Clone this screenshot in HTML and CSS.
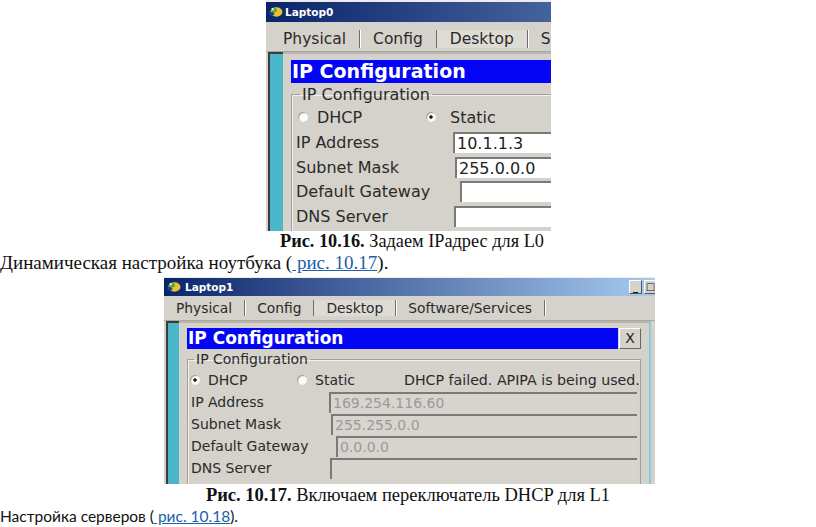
FILE: index.html
```html
<!DOCTYPE html>
<html lang="ru">
<head>
    <meta charset="UTF-8">
    <title>Рис. 10.16 – 10.17</title>
    <link rel="stylesheet" href="styles.css">
</head>
<body>

    <div class="win win-a">
        <div class="win-title">
            <svg class="win-icon" viewBox="0 0 16 12"><ellipse cx="9" cy="6" rx="6.5" ry="5" fill="#e6c42c"/><path d="M3 3 C5 0.5 9 1 9.5 3.5 C10 6 7 7 4.5 6.5Z" fill="#5aa83c"/><path d="M1 6 C3 5 6 6 7 8 C6 10 3 10 1.5 9Z" fill="#1d3f8f"/><circle cx="5" cy="3" r="1.2" fill="#f4f4e0"/></svg>
            <span>Laptop0</span>
        </div>
        <div class="win-tabs">
            <span class="tab">Physical</span><span class="tab">Config</span><span class="tab tab-on">Desktop</span><span class="tab">Software/Services</span>
        </div>
        <div class="win-body">
            <div class="side"></div>
            <div class="pane">
                <div class="pane-head"><span class="pane-title">IP Configuration</span></div>
                <fieldset class="group">
                    <legend>IP Configuration</legend>
                    <div class="radios">
                        <span class="opt"><i class="radio"></i>DHCP</span>
                        <span class="opt"><i class="radio radio-on"></i>Static</span>
                    </div>
                    <div class="field"><span class="label">IP Address</span><span class="box">10.1.1.3</span></div>
                    <div class="field"><span class="label">Subnet Mask</span><span class="box off-2">255.0.0.0</span></div>
                    <div class="field"><span class="label">Default Gateway</span><span class="box off-7"></span></div>
                    <div class="field"><span class="label">DNS Server</span><span class="box off-1"></span></div>
                </fieldset>
            </div>
        </div>
    </div>

    <p class="caption"><b>Рис. 10.16.</b> Задаем IPадрес для L0</p>
    <p class="para">Динамическая настройка ноутбука (<a href="#">&nbsp;рис. 10.17</a>).</p>

    <div class="win win-b">
        <div class="win-title">
            <svg class="win-icon" viewBox="0 0 16 12"><ellipse cx="9" cy="6" rx="6.5" ry="5" fill="#e6c42c"/><path d="M3 3 C5 0.5 9 1 9.5 3.5 C10 6 7 7 4.5 6.5Z" fill="#5aa83c"/><path d="M1 6 C3 5 6 6 7 8 C6 10 3 10 1.5 9Z" fill="#1d3f8f"/><circle cx="5" cy="3" r="1.2" fill="#f4f4e0"/></svg>
            <span>Laptop1</span>
            <span class="win-btns"><span class="win-btn">_</span><span class="win-btn">□</span></span>
        </div>
        <div class="win-tabs">
            <span class="tab">Physical</span><span class="tab">Config</span><span class="tab tab-on">Desktop</span><span class="tab">Software/Services</span>
        </div>
        <div class="win-body">
            <div class="side"></div>
            <div class="pane">
                <div class="pane-head"><span class="pane-title">IP Configuration</span><span class="close">X</span></div>
                <fieldset class="group">
                    <legend>IP Configuration</legend>
                    <div class="radios">
                        <span class="opt"><i class="radio radio-on"></i>DHCP</span>
                        <span class="opt"><i class="radio"></i>Static</span>
                        <span class="note">DHCP failed. APIPA is being used.</span>
                    </div>
                    <div class="field"><span class="label">IP Address</span><span class="box">169.254.116.60</span></div>
                    <div class="field"><span class="label">Subnet Mask</span><span class="box off-2">255.255.0.0</span></div>
                    <div class="field"><span class="label">Default Gateway</span><span class="box off-7">0.0.0.0</span></div>
                    <div class="field"><span class="label">DNS Server</span><span class="box off-1"></span></div>
                </fieldset>
            </div>
        </div>
    </div>

    <p class="caption"><b>Рис. 10.17.</b> Включаем переключатель DHCP для L1</p>
    <p class="para para-sans">Настройка серверов (<a href="#">&nbsp;рис. 10.18</a>).</p>

</body>
</html>
```

FILE: styles.css
```css
:root {
    --panel: #d5d2cb;
    --teal: #4ab6c9;
    --shade: #7a7a7a;
}
* { box-sizing: border-box; margin: 0; padding: 0; }
body {
    font-family: "Liberation Serif", "Times New Roman", serif;
    font-size: 18.3px;
    color: #111;
    background: #fff;
    width: 816px;
    height: 527px;
    overflow: hidden;
}

/* ---- окно Packet Tracer ---- */
.win {
    background: var(--panel);
    overflow: hidden;
    font-family: "DejaVu Sans", Verdana, sans-serif;
    color: #2a2a2a;
}
.win-title {
    display: flex;
    align-items: center;
    gap: 2px;
    padding-left: 2px;
    color: #fff;
    font-weight: bold;
    font-size: 10.5px;
    background: linear-gradient(to right, #0a246a, #a6caf0);
}
.win-icon { width: 15px; height: 12px; flex: none; }
.win-btns { margin-left: auto; display: flex; gap: 2px; margin-right: -2px; }
.win-btn {
    width: 13px;
    height: 14px;
    background: var(--panel);
    color: #111;
    font-size: 10px;
    line-height: 12px;
    text-align: center;
    border: 1px solid;
    border-color: #fff #555 #555 #fff;
}
.win-tabs {
    display: flex;
    align-items: center;
    white-space: nowrap;
    border-bottom: 1px solid #a9a6a0;
}
.tab {
    padding: 0 13px;
    border-right: 1px solid #6e6e6e;
    box-shadow: 1px 0 0 #fff;
    flex: none;
}
.tab-on { background: #dedbd5; }
.win-body {
    display: flex;
    padding-left: 2px;
}
.side {
    flex: none;
    background: var(--teal);
    border-left: 2px solid #3c3c3c;
    border-top: 2px solid #3c3c3c;
}
.pane {
    flex: none;
    border-top: 2px solid #b9b6b0;
}
.pane-head { display: flex; gap: 1px; }
.pane-title {
    flex: 1;
    background: #0505f5;
    color: #fff;
    font-weight: bold;
    padding-left: 1px;
    white-space: nowrap;
}
.close {
    flex: none;
    background: var(--panel);
    color: #222;
    text-align: center;
    border: 1px solid;
    border-color: #fff #666 #666 #fff;
}
.group {
    border: 1px solid #a3a09a;
    box-shadow: inset 1px 1px 0 #f2f0ec;
    min-width: 0;
}
.group legend { padding: 0 2px; }
.radios { display: flex; align-items: center; white-space: nowrap; }
.opt { display: flex; align-items: center; flex: none; }
.radio {
    width: 10px;
    height: 10px;
    border-radius: 50%;
    background: #fbfbfb;
    box-shadow: inset 1px 1px 1px #9a9a9a;
    flex: none;
}
.radio-on { background: radial-gradient(circle, #1a1a1a 0 1.4px, #fbfbfb 2px); }
.field { display: flex; align-items: center; white-space: nowrap; }
.label { flex: none; }
.box {
    flex: none;
    background: #fff;
    color: #222;
    border-top: 2px solid var(--shade);
    border-left: 2px solid var(--shade);
    padding-left: 2px;
    white-space: nowrap;
    overflow: hidden;
}

/* ---- первый снимок (крупнее) ---- */
.win-a { margin-left: 266px; width: 285px; height: 231px; border-top: 2px solid #ececec; }
.win-a .win-title { height: 20px; background-size: 760px 100%; }
.win-a .win-tabs { height: 30px; font-size: 15.5px; padding: 5px 0 0 4px; }
.win-a .side { width: 15px; }
.win-a .pane { padding: 6px 0 0 8px; }
.win-a .pane-title { height: 23px; line-height: 23px; font-size: 19px; width: 280px; }
.win-a .group { margin-top: 3px; width: 320px; padding: 0 0 6px 4px; font-size: 16px; }
.win-a .group legend { margin-left: 4px; line-height: 17px; }
.win-a .radios { height: 24px; margin-top: 2px; }
.win-a .radio { margin: 0 9px 0 2px; }
.win-a .opt:first-child { width: 128px; }
.win-a .opt:last-child .radio { margin-left: 2px; margin-right: 14px; }
.win-a .field { height: 24.5px; }
.win-a .radios + .field { margin-top: 1.5px; }
.win-a .label { width: 157px; }
.win-a .box { width: 140px; height: 21px; line-height: 19px; font-size: 16px; }

/* ---- второй снимок ---- */
.win-b { margin: 4px 0 0 164px; width: 491px; height: 207px; border-top: 1px solid #ececec; }
.win-b .win-title { height: 18px; }
.win-b .win-title span:nth-of-type(1) { margin-left: 2px; }
.win-b .win-tabs { height: 25px; font-size: 13.8px; padding-left: 0; }
.win-b .tab { padding: 0 12px; }
.win-b .side { width: 13px; }
.win-b .pane { padding: 5px 8px 0 8px; width: 472px; border-right: 2px solid #7fcfdb; }
.win-b .pane-title { height: 21px; line-height: 21px; font-size: 17px; }
.win-b .close { width: 22px; height: 21px; line-height: 19px; font-size: 14px; }
.win-b .group { margin-top: 2px; padding: 0 3px 8px 3px; font-size: 14px; }
.win-b .group legend { margin-left: 3px; line-height: 16px; }
.win-b .radios { height: 22px; margin-top: 2px; }
.win-b .radio { margin: 0 8px 0 -1px; }
.win-b .opt:first-child { width: 107px; }
.win-b .opt:nth-child(2) { width: 106px; }
.win-b .note { font-size: 14.2px; }
.win-b .field { height: 22px; }
.win-b .label { width: 138px; }
.win-b .box { flex: 1; height: 21px; line-height: 19px; font-size: 14px; background: #d8d5cf; color: #9a9a9a; }

.off-1 { margin-left: 1px; }
.off-2 { margin-left: 2px; }
.off-7 { margin-left: 7px; }

/* ---- текст документа ---- */
.caption { text-align: center; line-height: 21px; padding-left: 8px; }
.para { line-height: 21px; font-size: 19px; }
.para a { color: #2160a8; text-decoration: underline; }
.win-b + .caption { margin-top: 1px; padding-left: 0; font-size: 18.5px; }
.para-sans { font-family: Lato, "Open Sans", sans-serif; font-size: 15.5px; }
```
